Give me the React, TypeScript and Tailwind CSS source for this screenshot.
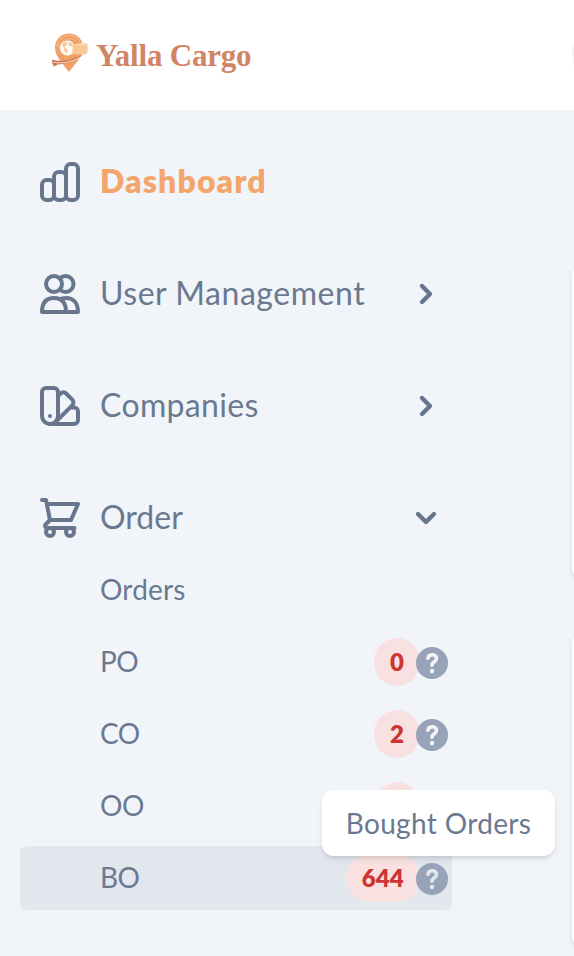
import type { ReactNode } from 'react';

function Icon({ children }: { children: ReactNode }) {
  return (
    <svg viewBox="0 0 40 40" fill="none" stroke="currentColor" strokeWidth="4" strokeLinecap="round" strokeLinejoin="round" className="size-10 shrink-0 text-[#67768d]">
      {children}
    </svg>
  );
}

const ChartIcon = () => (
  <Icon>
    <rect x="2" y="18" width="12" height="20" rx="4.5" />
    <rect x="14" y="10" width="12" height="28" rx="4.5" />
    <rect x="26" y="2" width="12" height="36" rx="4.5" />
  </Icon>
);

const UsersIcon = () => (
  <Icon>
    <circle cx="14" cy="10" r="8" />
    <path d="M20 4.2A8 8 0 1 1 20 15.8" />
    <path d="M2 38c0-9 4-14 12-14s12 5 12 14z" />
    <path d="M22 24.5C33 22 38 29 38 38H26" />
  </Icon>
);

const SwatchIcon = () => (
  <Icon>
    <path d="M6 2h8a4 4 0 0 1 4 4v24a8 8 0 0 1-16 0V6a4 4 0 0 1 4-4z" />
    <path d="M18.5 9.5l2-2a4 4 0 0 1 5.6 0l6.2 6.2a4 4 0 0 1 0 5.6L15.5 36" />
    <path d="M32 21.5h2a4 4 0 0 1 4 4V34a4 4 0 0 1-4 4H10" />
    <circle cx="10" cy="30" r="2" fill="currentColor" stroke="none" />
  </Icon>
);

const CartIcon = () => (
  <Icon>
    <path d="M2 2h4L10 22h21l7-16H7" />
    <path d="M10 22l-4 4C4.4 27.600 5 30 7.500 30h27" />
    <circle cx="10" cy="34" r="4" />
    <circle cx="30" cy="34" r="4" />
  </Icon>
);

function Chevron({ open }: { open?: boolean }) {
  return (
    <svg viewBox="0 0 40 40" fill="none" stroke="currentColor" strokeWidth="4.4" strokeLinecap="round" strokeLinejoin="round" className="mr-1.5 ml-auto size-10 text-[#67768d]">
      <path d={open ? 'M12 16l8 8 8-8' : 'M16 12l8 8-8 8'} />
    </svg>
  );
}

function HelpIcon({ hovered }: { hovered?: boolean }) {
  return (
    <svg viewBox="0 0 32 32" fill="none" className={hovered ? 'relative top-px size-8 shrink-0 text-[#e2e7ee]' : 'relative top-px size-8 shrink-0 text-[#f1f5fa]'}>
      <circle cx="16" cy="16" r="16" fill="#97a3b8" />
      <path d="M12 11.200C12.400 8.800 14 7.800 16.200 7.800c2.600 0 4.300 1.500 4.300 3.700 0 3.300-4.500 3.300-4.500 6.700" stroke="currentColor" strokeWidth="3.6" strokeLinecap="round" strokeLinejoin="round" />
      <circle cx="16" cy="24" r="2.200" fill="currentColor" />
    </svg>
  );
}

function Logo() {
  return (
    <svg viewBox="0 0 36 40" className="h-10 w-9 shrink-0">
      <path d="M17 .5C9 .5 3 6.500 3 14.500 3 23 10 30 17 39c7-9 14-16 14-24.500C31 6.500 25 .5 17 .5z" fill="#eea067" />
      <path d="M5 14.500a12 12 0 0 1 24-1" fill="none" stroke="#f7c79b" strokeWidth=".8" />
      <path d="M7.200 15a9.800 9.800 0 0 1 19-3" fill="none" stroke="#f7c79b" strokeWidth=".6" />
      <circle cx="15.500" cy="15" r="7.600" fill="#fffaf4" />
      <path d="M10 11l3-2 3 .5-1 2.500-2.500 1 1 2 2.500 2-1.500 3.500-2-2.500-1-3.500zM17 9l3 1 1 3-3 .5-1.500-2z" fill="#f5c79d" />
      <path d="M20.500 11.500L34.500 10l1 1.200v8.600l-2 1.400h-13z" fill="#f8c993" />
      <path d="M20.500 11.500L34.500 10l1 1.200-2 1.300z" fill="#fbdfb8" />
      <path d="M0 26.500C9 30 22 26 31 21.500 25 27.500 14 31 5.500 31.500L2 33.500C.5 31.500 0 29 0 26.500z" fill="#cb7552" />
      <path d="M1.500 29.300C10 31 20 28.500 27.500 24.500" fill="none" stroke="#fbe6d6" strokeWidth=".9" />
    </svg>
  );
}

function NavItem({ icon, label, active, chevron }: { icon: ReactNode; label: string; active?: boolean; chevron?: 'right' | 'down' }) {
  return (
    <div className="flex h-16 items-center pl-5">
      {icon}
      <span className={active ? 'pb-0.5 pl-5 text-[32px] leading-none font-extrabold tracking-[1.1px] text-[#f4a56b]' : label === 'User Management' ? 'pb-0.5 pl-5 text-[32px] leading-none tracking-[0.53px] whitespace-nowrap' : label === 'Companies' ? 'pb-0.5 pl-5 text-[32px] leading-none tracking-[0.35px]' : 'pb-0.5 pl-5 text-[32px] leading-none'}>
        {label}
      </span>
      {chevron && <Chevron open={chevron === 'down'} />}
    </div>
  );
}

function SubItem({ label, count, hovered }: { label: string; count?: string; hovered?: boolean }) {
  return (
    <div className={hovered ? 'flex h-16 items-center rounded-md bg-[#e2e7ee] pr-1 pl-20' : 'flex h-16 items-center pr-1 pl-20'}>
      <span className={label === 'Orders' ? 'pb-0.5 text-[28px] leading-none tracking-[0.2px]' : 'pb-0.5 text-[28px] leading-none tracking-[-0.5px]'}>{label}</span>
      {count !== undefined && (
        <div className="ml-auto flex items-center">
          <span className="-mr-1 flex h-12 min-w-[46px] items-center justify-center rounded-full bg-[#f9e1e1] px-4 text-[24px] leading-none font-extrabold tracking-[0.2px] text-[#cc3530]">
            {count}
          </span>
          <HelpIcon hovered={hovered} />
        </div>
      )}
    </div>
  );
}

export default function App() {
  return (
    <div className="flex h-[956px] w-[574px] flex-col overflow-hidden bg-[#f1f5fa] font-['Lato','Open_Sans',sans-serif] text-[#6a798f]">
      <header className="flex h-[110px] shrink-0 items-center bg-white pl-[52px]">
        <div className="-mt-1">
          <Logo />
        </div>
        <span className="pl-2 font-['Liberation_Serif',serif] text-[31px] leading-none font-bold tracking-[-0.2px] whitespace-nowrap text-[#d08564]">
          Yalla Cargo
        </span>
        <div className="mr-[-62px] ml-auto size-16 shrink-0 rounded-full bg-[#f1f5fa]" />
      </header>
      <div className="flex min-h-0 flex-1">
        <aside className="relative w-[472px] shrink-0 px-5 pt-10">
          <nav className="flex w-[432px] flex-col gap-12">
            <NavItem icon={<ChartIcon />} label="Dashboard" active />
            <NavItem icon={<UsersIcon />} label="User Management" chevron="right" />
            <NavItem icon={<SwatchIcon />} label="Companies" chevron="right" />
            <div className="flex flex-col gap-2">
              <NavItem icon={<CartIcon />} label="Order" chevron="down" />
              <SubItem label="Orders" />
              <SubItem label="PO" count="0" />
              <SubItem label="CO" count="2" />
              <SubItem label="OO" count="" />
              <SubItem label="BO" count="644" hovered />
            </div>
          </nav>
          <div role="tooltip" className="absolute top-[680px] left-[322px] z-10 flex h-[66px] w-[233px] items-center justify-center rounded-xl bg-white pb-px text-[28px] leading-none tracking-[0.35px] whitespace-nowrap shadow-md">
            Bought Orders
          </div>
        </aside>
        <main className="flex min-w-0 flex-1 flex-col gap-[52px] pt-[154px] pl-[100px]">
          <section className="h-[316px] w-80 shrink-0 rounded-xl bg-white shadow-md" />
          <section className="h-[316px] w-80 shrink-0 rounded-xl bg-white shadow-md" />
        </main>
      </div>
    </div>
  );
}
